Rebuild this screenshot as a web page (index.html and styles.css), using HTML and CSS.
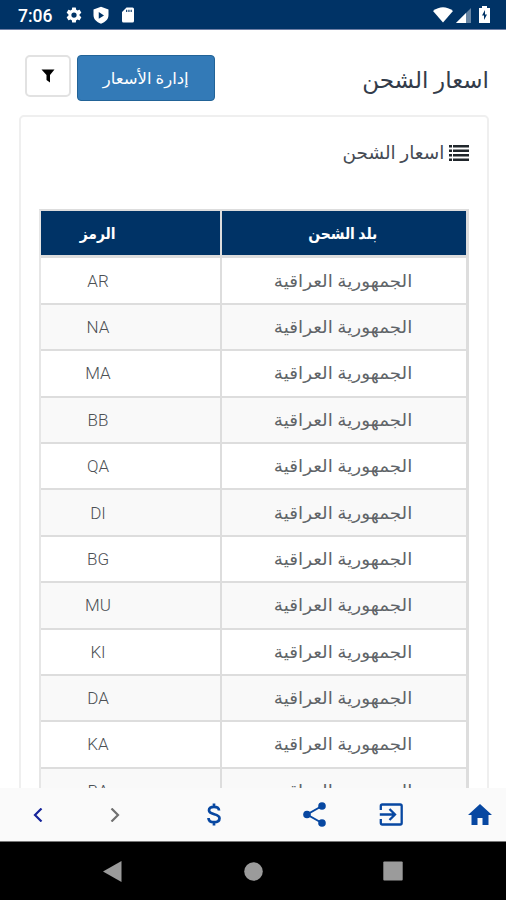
FILE: index.html
```html
<!DOCTYPE html>
<html lang="ar">
<head>
<meta charset="utf-8">
<title>اسعار الشحن</title>
<link rel="stylesheet" href="styles.css">
</head>
<body>
<div class="screen">
  <header class="status">
    <span class="clock">7:06</span>
    <svg class="gear" width="18" height="18" viewBox="0 0 24 24"><path d="M19.43 12.98c.04-.32.07-.64.07-.98s-.03-.66-.07-.98l2.11-1.65c.19-.15.24-.42.12-.64l-2-3.46c-.12-.22-.39-.3-.61-.22l-2.49 1c-.52-.4-1.08-.73-1.69-.98l-.38-2.65A.49.49 0 0 0 14 2h-4c-.25 0-.46.18-.49.42l-.38 2.65c-.61.25-1.17.59-1.69.98l-2.49-1c-.23-.09-.49 0-.61.22l-2 3.46c-.13.22-.07.49.12.64l2.11 1.65c-.04.32-.07.65-.07.98s.03.66.07.98l-2.11 1.65c-.19.15-.24.42-.12.64l2 3.46c.12.22.39.3.61.22l2.49-1c.52.4 1.08.73 1.69.98l.38 2.65c.03.24.24.42.49.42h4c.25 0 .46-.18.49-.42l.38-2.65c.61-.25 1.17-.59 1.69-.98l2.49 1c.23.09.49 0 .61-.22l2-3.46c.12-.22.07-.49-.12-.64zM12 15.500a3.500 3.500 0 1 1 0-7 3.500 3.500 0 0 1 0 7z"/></svg>
    <svg class="shield" width="18" height="18" viewBox="0 0 24 24"><path fill-rule="evenodd" d="M12 1 2 4.500V12c0 5.500 4 9.500 10 11.500 6-2 10-6 10-11.500V4.500zM9 8l7 4.500-7 4.500z"/></svg>
    <svg class="card-icon" width="18" height="18" viewBox="0 0 24 24"><path fill-rule="evenodd" d="M18 2h-8L4 8v12a2 2 0 0 0 2 2h12a2 2 0 0 0 2-2V4a2 2 0 0 0-2-2zM9.500 5H11v3H9.500zM12.500 5H14v3h-1.500zM15.500 5H17v3h-1.500z"/></svg>
    <span class="grow"></span>
    <svg class="wifi" width="20" height="16" viewBox="0 0 20 16"><path d="M0 4Q10-3.500 20 4L10 15.500z"/></svg>
    <svg class="signal" width="15" height="16" viewBox="0 0 15 16"><path d="M0 16 15 1v15z" opacity=".4"/><path d="M0 16 10 6v10z"/></svg>
    <svg class="battery" width="11" height="17" viewBox="0 0 11 17"><path fill-rule="evenodd" d="M3 0h5v2h3v15H0V2h3zM6 4 3 9.500h2V14l3-5.500H6z"/></svg>
  </header>

  <main class="page">
    <div class="toolbar">
      <button class="filter"><svg width="14" height="14" viewBox="0 0 14 14"><path d="M.5.500h13L9 6v7.500L5.500 11V6z"/></svg></button>
      <button class="manage" dir="rtl"><span class="fit">إدارة الأسعار</span></button>
      <h1 dir="rtl"><span class="fit">اسعار الشحن</span></h1>
    </div>
    <section class="card">
      <h2 dir="rtl"><svg width="20" height="16" viewBox="0 0 20 16"><path d="M0 0h3v2.500H0zM4 0h16v2.500H4zM0 4.500h3V7H0zM4 4.500h16V7H4zM0 9h3v2.500H0zM4 9h16v2.500H4zM0 13.500h3V16H0zM4 13.500h16V16H4z"/></svg><span class="fit">اسعار الشحن</span></h2>
      <div class="table" dir="rtl">
        <div class="row head"><div class="country"><span class="fit">بلد الشحن</span></div><div class="code"><span class="fit">الرمز</span></div></div>
        <div class="row"><div class="country"><span class="fit">الجمهورية العراقية</span></div><div class="code">AR</div></div>
        <div class="row"><div class="country"><span class="fit">الجمهورية العراقية</span></div><div class="code">NA</div></div>
        <div class="row"><div class="country"><span class="fit">الجمهورية العراقية</span></div><div class="code">MA</div></div>
        <div class="row"><div class="country"><span class="fit">الجمهورية العراقية</span></div><div class="code">BB</div></div>
        <div class="row"><div class="country"><span class="fit">الجمهورية العراقية</span></div><div class="code">QA</div></div>
        <div class="row"><div class="country"><span class="fit">الجمهورية العراقية</span></div><div class="code">DI</div></div>
        <div class="row"><div class="country"><span class="fit">الجمهورية العراقية</span></div><div class="code">BG</div></div>
        <div class="row"><div class="country"><span class="fit">الجمهورية العراقية</span></div><div class="code">MU</div></div>
        <div class="row"><div class="country"><span class="fit">الجمهورية العراقية</span></div><div class="code">KI</div></div>
        <div class="row"><div class="country"><span class="fit">الجمهورية العراقية</span></div><div class="code">DA</div></div>
        <div class="row"><div class="country"><span class="fit">الجمهورية العراقية</span></div><div class="code">KA</div></div>
        <div class="row"><div class="country"><span class="fit">الجمهورية العراقية</span></div><div class="code">BA</div></div>
      </div>
    </section>
  </main>

  <nav class="tabs">
    <svg class="back" width="10" height="14" viewBox="0 0 10 14"><path d="M8.500 .5 2 7l6.500 6.500"/></svg>
    <svg class="next" width="10" height="14" viewBox="0 0 10 14"><path d="M1.500 .5 8 7l-6.500 6.500"/></svg>
    <svg class="dollar" width="14" height="23" viewBox="0 0 14 23"><path d="M12 7.500C12 5 10 3.800 7 3.800S2 5 2 7.300c0 5.200 10.500 2.800 10.500 8 0 2.500-2.300 3.900-5.500 3.900s-5.500-1.500-5.500-4.200M7 .5v3.300M7 19.200v3.300"/></svg>
    <svg class="share" width="23" height="25" viewBox="0 0 23 25"><path d="M19 4 4 12.500 19 21"/><circle cx="19" cy="4" r="3.800"/><circle cx="4" cy="12.500" r="3.800"/><circle cx="19" cy="21" r="3.800"/></svg>
    <svg class="enter" width="24" height="23" viewBox="0 0 24 23"><path d="M1.800 7V3q0-1.500 1.500-1.500h17.900q1.500 0 1.500 1.500v17q0 1.500-1.500 1.500H3.300q-1.500 0-1.500-1.500v-4M.8 11.500H15M10.500 6l5.500 5.500-5.500 5.500"/></svg>
    <svg class="home" width="24" height="21" viewBox="0 0 24 21"><path d="M12 0 0 11h3.500v10h6v-7h5v7h6V11H24z"/></svg>
  </nav>
  <footer class="system">
    <svg class="sys-back" width="19" height="21" viewBox="0 0 19 21"><path d="M18.500 0v21L0 10.500z"/></svg>
    <svg class="sys-home" width="19" height="19" viewBox="0 0 19 19"><circle cx="9.500" cy="9.500" r="9.300"/></svg>
    <svg class="sys-recent" width="20" height="20" viewBox="0 0 20 20"><rect x=".3" y=".5" width="19.400" height="19" rx="1"/></svg>
  </footer>
</div>
</body>
</html>
```
FILE: styles.css
```css
* { box-sizing: border-box; }
body { margin: 0; background: #fff; font-family: Roboto, "DejaVu Sans", sans-serif; }
svg { display: block; flex: none; }
.screen { width: 506px; height: 900px; display: flex; flex-direction: column; overflow: hidden; }
.fit { display: inline-block; white-space: nowrap; }

.status { height: 30px; flex: none; display: flex; align-items: center; padding: 0 16px 0 18px; background: #003366; border-bottom: 1px solid #6f7fa5; color: #fff; fill: #fff; }
.clock { width: 35px; font-size: 17.5px; font-weight: 500; line-height: 30px; padding-top: 2px; }
.gear { margin-left: 12px; }
.shield { margin-left: 9px; }
.card-icon { margin-left: 9px; }
.grow { flex: 1; }
.signal { margin-left: 3px; }
.battery { margin-left: 8px; }

.page { flex: 1; min-height: 0; overflow: hidden; padding: 25px 17px 0 19px; }
.toolbar { display: flex; align-items: flex-start; height: 46px; padding-left: 6px; }
button { display: flex; align-items: center; justify-content: center; padding: 0; font: inherit; }
.filter { width: 46px; height: 42px; background: #fff; border: 2px solid #e2e2e2; border-radius: 5px; }
.manage { width: 138px; height: 46px; margin-left: 6px; background: #337ab7; border: 1px solid #226397; border-radius: 4px; color: #fff; font-size: 16px; }
.manage .fit { transform: scaleX(1.03); }
h1 { margin: 0 0 0 auto; font-size: 23px; font-weight: 400; line-height: 52px; color: #333c4a; }
.card { height: 760px; width: 470px; margin-top: 14px; border: 2px solid #efefef; border-radius: 5px; padding: 0 18px; }
h2 { margin: 0; height: 92px; display: flex; align-items: center; gap: 5px; padding-bottom: 21px; font-size: 18px; font-weight: 400; color: #454b54; }
h2 .fit { transform: scaleX(1.025); transform-origin: right; }
h2 svg { fill: #20262b; }

.table { width: 430px; border: 2px solid #ddd; border-left-color: #e6e6e6; border-right-width: 3px; }
.row { display: flex; height: 46.4px; border-bottom: 2px solid #ddd; font-size: 17px; color: #606468; background: #fff; }
.row:nth-child(odd) { background: #f9f9f9; }
.row > div { display: flex; align-items: center; justify-content: center; }
.country { width: 246px; border-left: 2px solid #ddd; padding-right: 2px; }
.country .fit { transform: scaleX(1.08); }
.code { flex: 1; padding-right: 65px; font-weight: 300; color: #4c5054; }
.row.head { height: 47.4px; background: #003366; border-bottom-width: 3px; color: #fff; font-weight: 700; font-size: 16px; }
.head .code { font-weight: 700; color: #fff; }
.head .fit { transform: scaleX(.87); }

.tabs { height: 54px; flex: none; display: flex; align-items: center; background: #fafafa; border-bottom: 1px solid #777; fill: #0747a1; stroke: #0747a1; }
.back { margin-left: 33px; fill: none; stroke: #16249a; stroke-width: 2.2; }
.next { margin-left: 67px; fill: none; stroke: #707070; stroke-width: 2.2; }
.dollar { margin-left: 87px; fill: none; stroke-width: 2.7; }
.share { margin-left: 82px; stroke-width: 2; }
.share path { fill: none; }
.share circle { stroke: none; }
.enter { margin-left: 53px; fill: none; stroke-width: 2.3; }
.home { margin-left: 65px; stroke: none; }
.system { height: 58px; flex: none; display: flex; align-items: center; background: #000; fill: #9b9b9b; }
.sys-back { margin-left: 103px; }
.sys-home { margin-left: 122px; }
.sys-recent { margin-left: 120px; }
```
